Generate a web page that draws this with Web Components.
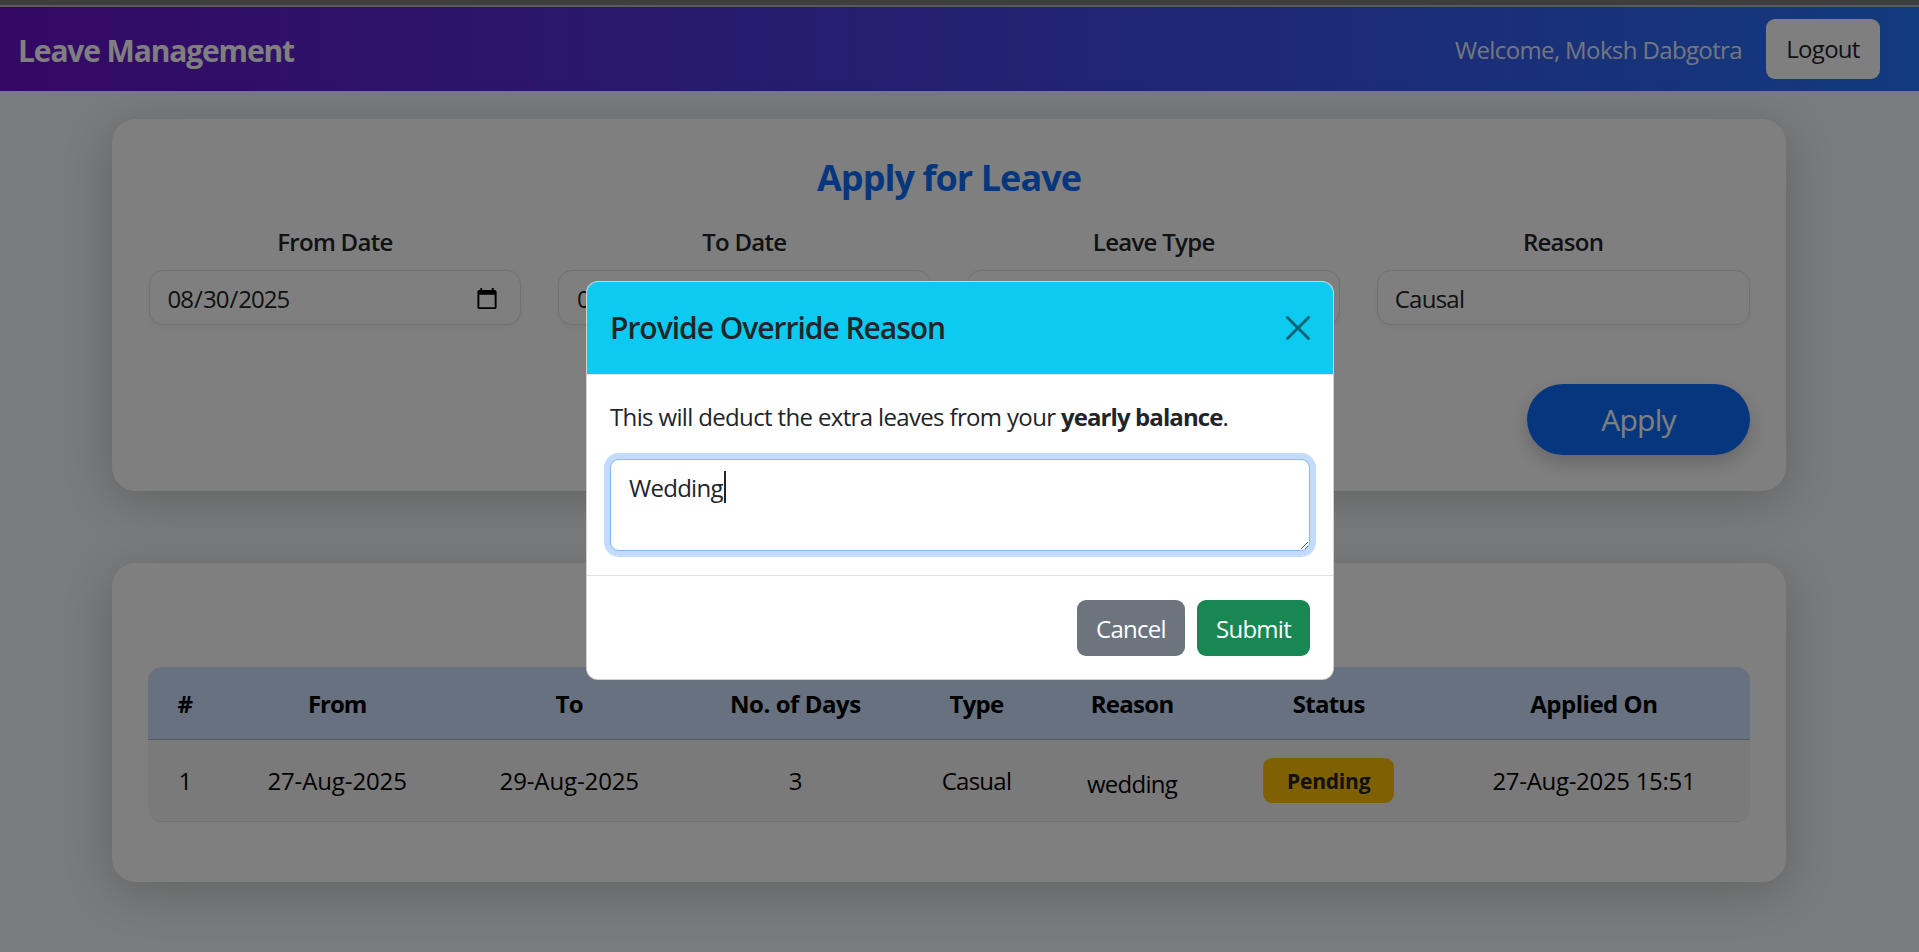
<!DOCTYPE html>
<html lang="en">
<head>
<meta charset="utf-8">
<title>Leave Management</title>
<style>
  html, body { margin: 0; height: 100%; }
  body { font-family: "Open Sans", "Liberation Sans", sans-serif; font-size: 24px; letter-spacing: -0.03em; color: #212529; background: #f4f6f8; }
</style>
</head>
<body>
<leave-app>
  <top-nav slot="nav" brand="Leave Management" user="Moksh Dabgotra"></top-nav>

  <leave-card>
    <apply-form></apply-form>
  </leave-card>

  <leave-card class="history">
    <leave-table></leave-table>
  </leave-card>

  <override-modal slot="modal" heading="Provide Override Reason" value="Wedding">
    This will deduct the extra leaves from your <b>yearly balance</b>.
  </override-modal>
</leave-app>

<script>
class LeaveApp extends HTMLElement {
  constructor() {
    super();
    this.attachShadow({ mode: "open" });
  }

  connectedCallback() {
    this.shadowRoot.innerHTML = `
      <style>
        :host { display: block; min-height: 100vh; box-sizing: border-box; padding-top: 7px; position: relative; background: linear-gradient(#3e3e3e 5px, #5a5a5a 5px, #5a5a5a 7px, transparent 7px); }
        .page { background: #f4f6f8; height: 861px; box-sizing: border-box; padding: 28px 133px 0 112px; display: flex; flex-direction: column; gap: 72px; }
        .backdrop { position: absolute; inset: 7px 0 0 0; background: rgba(0, 0, 0, 0.5); display: flex; align-items: center; justify-content: center; }
      </style>
      <slot name="nav"></slot>
      <div class="page"><slot></slot></div>
      <div class="backdrop"><slot name="modal"></slot></div>
    `;
  }
}

class TopNav extends HTMLElement {
  constructor() {
    super();
    this.attachShadow({ mode: "open" });
  }

  connectedCallback() {
    const brand = this.getAttribute("brand");
    const user = this.getAttribute("user");

    this.shadowRoot.innerHTML = `
      <style>
        :host { display: flex; align-items: center; justify-content: space-between; height: 84px; padding: 0 39px 0 18px; background: linear-gradient(90deg, #6a11cb, #2575fc); }
        .brand { font-size: 30px; font-weight: 700; color: #fff; letter-spacing: -0.038em; padding-top: 2px; }
        .right { display: flex; align-items: center; gap: 24px; }
        .user { color: rgba(255, 255, 255, 0.9); letter-spacing: -0.026em; }
        button { font: inherit; letter-spacing: inherit; color: #212529; background: #fff; border: 0; border-radius: 9px; width: 114px; height: 60px; padding: 0 0 2px; }
      </style>
      <span class="brand">${brand}</span>
      <div class="right">
        <span class="user">Welcome, ${user}</span>
        <button>Logout</button>
      </div>
    `;
  }
}

class LeaveCard extends HTMLElement {
  constructor() {
    super();
    this.attachShadow({ mode: "open" });
  }

  connectedCallback() {
    this.shadowRoot.innerHTML = `
      <style>
        :host { display: block; box-sizing: border-box; background: #fff; border-radius: 24px; padding: 36px; box-shadow: 0 10px 50px rgba(0, 0, 0, 0.2); }
        :host(.history) { padding: 104px 36px 60px; }
      </style>
      <slot></slot>
    `;
  }
}

class ApplyForm extends HTMLElement {
  constructor() {
    super();
    this.attachShadow({ mode: "open" });
  }

  connectedCallback() {
    this.shadowRoot.innerHTML = `
      <style>
        :host { display: block; }
        h2 { margin: 0 0 25px; padding-top: 1px; font-size: 36px; line-height: 43px; font-weight: 700; color: #0d6efd; text-align: center; letter-spacing: -0.026em; }
        .row { display: grid; grid-template-columns: repeat(4, 1fr); gap: 36.5px; padding: 0 0.5px; }
        .actions { display: flex; justify-content: flex-end; margin-top: 59px; }
        button { font: inherit; font-size: 30px; letter-spacing: inherit; width: 223px; height: 71px; padding: 0; border: 0; border-radius: 36px; color: #fff; background: #0d6efd; box-shadow: 0 8px 20px rgba(0, 0, 0, 0.2); }
      </style>
      <h2>Apply for Leave</h2>
      <div class="row">
        <form-field label="From Date" type="date" value="2025-08-30"></form-field>
        <form-field label="To Date" type="date" value="2025-08-30"></form-field>
        <form-field label="Leave Type"></form-field>
        <form-field label="Reason" value="Causal"></form-field>
      </div>
      <div class="actions"><button>Apply</button></div>
    `;
  }
}

class FormField extends HTMLElement {
  constructor() {
    super();
    this.attachShadow({ mode: "open" });
  }

  connectedCallback() {
    const label = this.getAttribute("label");
    const type = this.getAttribute("type") || "text";
    const value = this.getAttribute("value") || "";

    this.shadowRoot.innerHTML = `
      <style>
        :host { display: block; min-width: 0; }
        label { display: block; text-align: center; font-weight: 600; line-height: 36px; margin-bottom: 10px; }
        input { display: block; box-sizing: border-box; width: 100%; height: 55px; padding: 2px 18px 0 17px; font: inherit; letter-spacing: inherit; color: #212529; background: #fff; border: 1px solid #dee2e6; border-radius: 14px; box-shadow: 0 2px 6px rgba(0, 0, 0, 0.05); outline: 0; }
        input[type="date"] { padding-right: 19px; letter-spacing: -0.04em; }
      </style>
      <label>${label}</label>
      <input type="${type}" value="${value}">
    `;
  }
}

class LeaveTable extends HTMLElement {
  constructor() {
    super();
    this.attachShadow({ mode: "open" });
  }

  connectedCallback() {
    const heads = ["#", "From", "To", "No. of Days", "Type", "Reason", "Status", "Applied On"];
    const widths = [74, 230, 234, 218, 144, 167, 226, 308];

    this.shadowRoot.innerHTML = `
      <style>
        :host { display: block; border-radius: 14px; overflow: hidden; border-bottom: 1px solid #dee2e6; }
        table { width: 100%; table-layout: fixed; border-collapse: collapse; text-align: center; color: #000; }
        th { height: 72px; padding: 1px 0 0; box-sizing: border-box; background: #cfe2ff; border-bottom: 1px solid #aab8cc; font-weight: 700; }
        th:nth-child(2) { letter-spacing: -0.045em; }
        th:nth-child(4) { letter-spacing: -0.018em; }
        th:nth-child(8) { letter-spacing: -0.02em; }
        td { height: 82px; padding: 0; box-sizing: border-box; background: #f5f5f5; }
        td.low { padding-top: 6px; }
        td.date { letter-spacing: -0.005em; }
        td.stamp { letter-spacing: -0.013em; }
        th:last-child, td:last-child { padding-right: 4px; }
      </style>
      <table>
        <colgroup>${widths.map((w) => `<col style="width:${w}px">`).join("")}</colgroup>
        <thead><tr>${heads.map((h) => `<th>${h}</th>`).join("")}</tr></thead>
        <tbody>
          <tr>
            <td>1</td>
            <td class="date">27-Aug-2025</td>
            <td class="date">29-Aug-2025</td>
            <td>3</td>
            <td>Casual</td>
            <td class="low">wedding</td>
            <td><status-badge>Pending</status-badge></td>
            <td class="stamp">27-Aug-2025 15:51</td>
          </tr>
        </tbody>
      </table>
    `;
  }
}

class StatusBadge extends HTMLElement {
  constructor() {
    super();
    this.attachShadow({ mode: "open" });
  }

  connectedCallback() {
    this.shadowRoot.innerHTML = `
      <style>
        :host { display: inline-flex; align-items: center; justify-content: center; box-sizing: border-box; width: 131px; height: 45px; padding-top: 2px; border-radius: 9px; background: #ffc107; color: #212529; font-size: 21px; font-weight: 700; letter-spacing: -0.01em; vertical-align: middle; }
      </style>
      <slot></slot>
    `;
  }
}

class OverrideModal extends HTMLElement {
  constructor() {
    super();
    this.attachShadow({ mode: "open" });
  }

  connectedCallback() {
    const heading = this.getAttribute("heading");
    const value = this.getAttribute("value");

    this.shadowRoot.innerHTML = `
      <style>
        :host { display: block; box-sizing: border-box; width: 748px; margin: 2px 0 0 1px; background: #fff; border: 1px solid rgba(0, 0, 0, 0.175); border-radius: 12px; overflow: hidden; color: #212529; }
        header { display: flex; align-items: center; justify-content: space-between; height: 93px; box-sizing: border-box; padding: 0 23px; background: #0dcaf0; border-bottom: 1px solid #dee2e6; }
        h5 { margin: 0; font-size: 30px; font-weight: 600; line-height: 36px; letter-spacing: -0.034em; }
        header svg { width: 24px; height: 24px; display: block; opacity: 0.5; }
        .body { padding: 24px 23px; }
        p { margin: 0 0 24px; line-height: 36px; letter-spacing: -0.027em; }
        ::slotted(b) { letter-spacing: -0.038em; }
        .field { position: relative; }
        textarea { display: block; box-sizing: border-box; width: 100%; height: 92px; padding: 11px 18px; font: inherit; letter-spacing: inherit; color: #212529; border: 1px solid #86b7fe; border-radius: 9px; box-shadow: 0 0 0 6px rgba(13, 110, 253, 0.25); outline: 0; caret-color: transparent; }
        .caret { position: absolute; left: 114px; top: 12px; width: 2px; height: 32px; background: #212529; }
        footer { display: flex; justify-content: flex-end; gap: 12px; padding: 24px 23px 23px; border-top: 1px solid #dee2e6; }
        button { font: inherit; letter-spacing: inherit; height: 56px; padding: 0; border: 0; border-radius: 9px; color: #fff; }
        .cancel { width: 108px; background: #6c757d; }
        .submit { width: 113px; background: #198754; }
      </style>
      <header>
        <h5>${heading}</h5>
        <svg viewBox="0 0 16 16" fill="#000"><path d="M.293.293a1 1 0 0 1 1.414 0L8 6.586 14.293.293a1 1 0 1 1 1.414 1.414L9.414 8l6.293 6.293a1 1 0 0 1-1.414 1.414L8 9.414l-6.293 6.293a1 1 0 0 1-1.414-1.414L6.586 8 .293 1.707a1 1 0 0 1 0-1.414"/></svg>
      </header>
      <div class="body">
        <p><slot></slot></p>
        <div class="field">
          <textarea>${value}</textarea>
          <span class="caret"></span>
        </div>
      </div>
      <footer>
        <button class="cancel">Cancel</button>
        <button class="submit">Submit</button>
      </footer>
    `;
  }
}

customElements.define("leave-app", LeaveApp);
customElements.define("top-nav", TopNav);
customElements.define("leave-card", LeaveCard);
customElements.define("apply-form", ApplyForm);
customElements.define("form-field", FormField);
customElements.define("leave-table", LeaveTable);
customElements.define("status-badge", StatusBadge);
customElements.define("override-modal", OverrideModal);
</script>
</body>
</html>
